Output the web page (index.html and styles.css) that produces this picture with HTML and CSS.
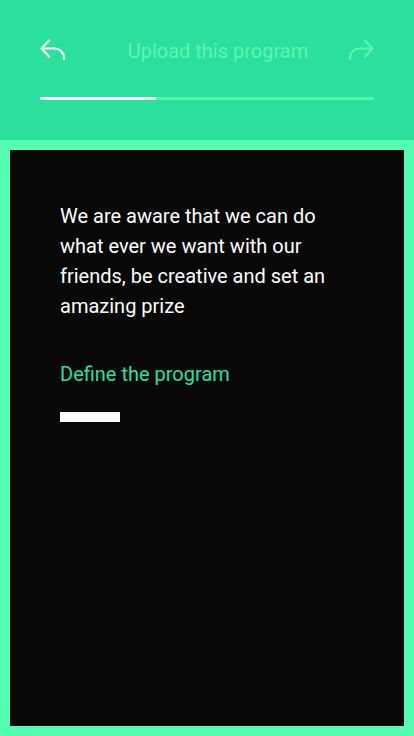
FILE: index.html
```html
<!DOCTYPE html>
<html>
<head>
<meta charset="utf-8">
<link rel="stylesheet" href="styles.css">
</head>
<body>
<div class="app">
  <header class="header">
    <div class="nav">
      <svg class="icon" viewBox="0 0 26 21" width="26" height="21">
        <path d="M9 1.5 L1.5 9.5 L9 17.5 M1.5 9.5 H14.5 A9.5 9.5 0 0 1 24 19 V20.5" fill="none" stroke="#ffffff" stroke-width="2.2" stroke-linecap="round" stroke-linejoin="round"/>
      </svg>
      <div class="title">Upload this program</div>
      <svg class="icon" viewBox="0 0 26 21" width="26" height="21">
        <path d="M17 1.5 L24.5 9.5 L17 17.5 M24.5 9.5 H11.5 A9.5 9.5 0 0 0 2 19 V20.5" fill="none" stroke="#5cf5b0" stroke-width="2.2" stroke-linecap="round" stroke-linejoin="round"/>
      </svg>
    </div>
    <div class="progress"><div class="progress-fill"></div></div>
  </header>
  <main class="main">
    <section class="card">
      <p class="text">We are aware that we can do what ever we want with our friends, be creative and set an amazing prize</p>
      <p class="link">Define the program</p>
      <div class="bar"></div>
    </section>
  </main>
</div>
</body>
</html>
```
FILE: styles.css
```css
* { box-sizing: border-box; }
html, body { margin: 0; padding: 0; }
body {
  font-family: Roboto, "Noto Sans", sans-serif;
  background: #55ffb1;
}
.app {
  width: 414px;
  height: 736px;
  display: flex;
  flex-direction: column;
}
.header {
  background: #2be09c;
  height: 140px;
  padding: 40px 40px 0 40px;
}
.nav {
  display: grid;
  grid-template-columns: 26px 1fr 26px;
  align-items: start;
  height: 21px;
}
.icon { display: block; margin-top: -1px; }
.title {
  text-align: center;
  padding-left: 22px;
  font-size: 20px;
  line-height: 20px;
  color: #5cf5b0;
  margin-top: 1px;
}
.progress {
  margin-top: 36px;
  height: 3px;
  background: #55f5ae;
}
.progress-fill {
  width: 116px;
  height: 3px;
  background: #ffffff;
}
.main {
  flex: 1;
  padding: 10px;
  display: flex;
}
.card {
  flex: 1;
  background: #080808;
  padding: 51px 50px 0 50px;
}
.text {
  margin: 0;
  max-width: 280px;
  color: #ffffff;
  font-size: 20px;
  line-height: 30px;
}
.link {
  margin: 38px 0 0 0;
  color: #2be09c;
  font-size: 20px;
  line-height: 30px;
}
.bar {
  margin-top: 23px;
  width: 60px;
  height: 10px;
  background: #ffffff;
}
```
